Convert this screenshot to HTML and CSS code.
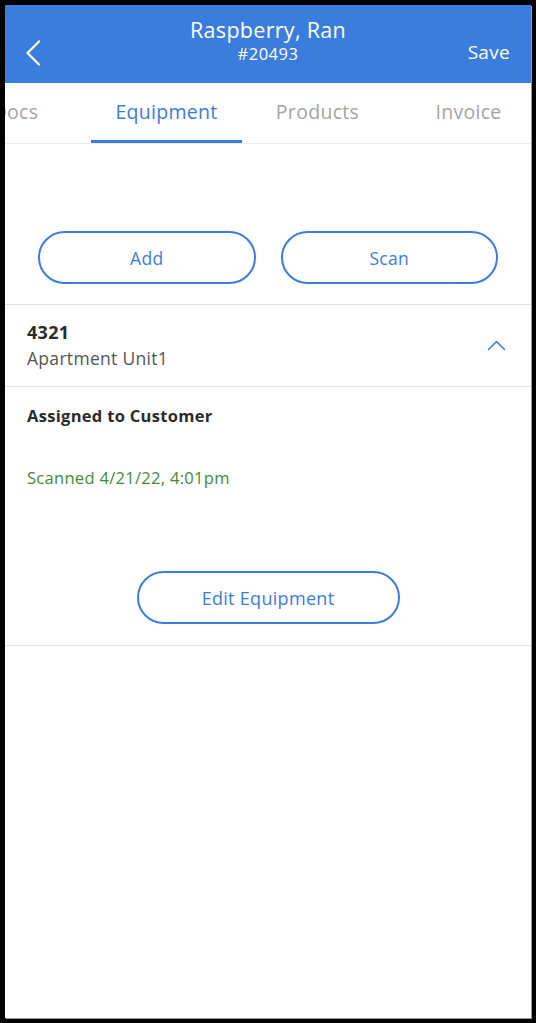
FILE: index.html
```html
<!DOCTYPE html>
<html>
<head>
    <title>Job #20493 - Equipment</title>
    <link rel="stylesheet" href="styles.css">
</head>
<body>
    <div class="screen">
        <header class="topbar">
            <button class="back" aria-label="Back">
                <svg width="16" height="26" viewBox="0 0 16 26">
                    <path d="M14 1.5 L2.5 13 L14 24.5" fill="none" stroke="#fff" stroke-width="2.2" stroke-linecap="round" stroke-linejoin="round"/>
                </svg>
            </button>
            <div class="title">
                <div class="name">Raspberry, Ran</div>
                <div class="num">#20493</div>
            </div>
            <button class="save">Save</button>
        </header>

        <nav class="tabs">
            <div class="tab-strip">
                <div class="tab">Docs</div>
                <div class="tab active">Equipment</div>
                <div class="tab">Products</div>
                <div class="tab">Invoice</div>
            </div>
        </nav>

        <div class="actions">
            <button class="pill">Add</button>
            <button class="pill">Scan</button>
        </div>

        <div class="item">
            <div class="item-text">
                <div class="item-id">4321</div>
                <div class="item-loc">Apartment Unit1</div>
            </div>
            <svg class="toggle" width="19" height="11" viewBox="0 0 19 11">
                <path d="M1.5 9.5 L9.5 1.5 L17.5 9.5" fill="none" stroke="#3b7ddc" stroke-width="1.6" stroke-linecap="round" stroke-linejoin="round"/>
            </svg>
        </div>

        <div class="detail">
            <div class="assigned">Assigned to Customer</div>
            <div class="scanned">Scanned 4/21/22, 4:01pm</div>
            <div class="detail-actions">
                <button class="pill wide">Edit Equipment</button>
            </div>
        </div>
    </div>
</body>
</html>
```

FILE: styles.css
```css
body { margin: 0; padding: 5px; background: #000; font-family: "Open Sans", "DejaVu Sans", sans-serif; letter-spacing: 0.3px; }
button { font-family: inherit; letter-spacing: inherit; background: none; border: none; padding: 0; cursor: pointer; }

.screen { width: 526px; height: 1013px; background: #fff; overflow: hidden; box-shadow: 1px 1px 0 #9a9a9a; }

.topbar { display: grid; grid-template-columns: 1fr auto 1fr; align-items: start; height: 78px; background: #3b7ddc; color: #fff; }
.back { justify-self: start; margin: 35px 0 0 20px; width: 16px; height: 26px; display: flex; }
.title { text-align: center; padding-top: 12px; }
.name { font-size: 21.5px; line-height: 26px; font-weight: 500; }
.num { font-size: 16.5px; line-height: 22px; letter-spacing: 0.5px; }
.save { justify-self: end; margin: 35px 21px 0 0; color: #fff; font-size: 19px; line-height: 24px; font-weight: 500; }

.tabs { height: 60px; border-bottom: 1px solid #ececec; overflow: hidden; }
.tab-strip { display: flex; margin-left: -65px; height: 100%; }
.tab { flex: 0 0 151px; display: flex; align-items: center; justify-content: center; box-sizing: border-box; height: 60px; padding-bottom: 1px; font-size: 19.5px; color: #a3a3a3; border-bottom: 3px solid transparent; }
.tab.active { color: #3b7ddc; border-bottom-color: #3b7ddc; }

.actions { display: flex; gap: 25px; padding: 87px 33px 20px; border-bottom: 1px solid #e2e2e2; }
.pill { height: 53px; border: 2px solid #3b7ddc; border-radius: 27px; color: #3b7ddc; font-size: 17.5px; background: #fff; }
.actions .pill { flex: 1; }
.pill.wide { width: 263px; font-size: 18px; }

.item { display: flex; align-items: center; justify-content: space-between; padding: 14px 25px 15px 22px; border-bottom: 1px solid #e2e2e2; }
.item-id { font-size: 18px; line-height: 26px; font-weight: 700; color: #2b2b2b; }
.item-loc { font-size: 17.5px; line-height: 26px; color: #555; }

.detail { padding: 17px 22px 21px; border-bottom: 1px solid #e2e2e2; }
.assigned { font-size: 16.5px; line-height: 24px; font-weight: 700; color: #2b2b2b; }
.scanned { margin-top: 38px; font-size: 16.5px; line-height: 24px; color: #3f8c33; }
.detail-actions { display: flex; justify-content: center; margin-top: 81px; }
```
